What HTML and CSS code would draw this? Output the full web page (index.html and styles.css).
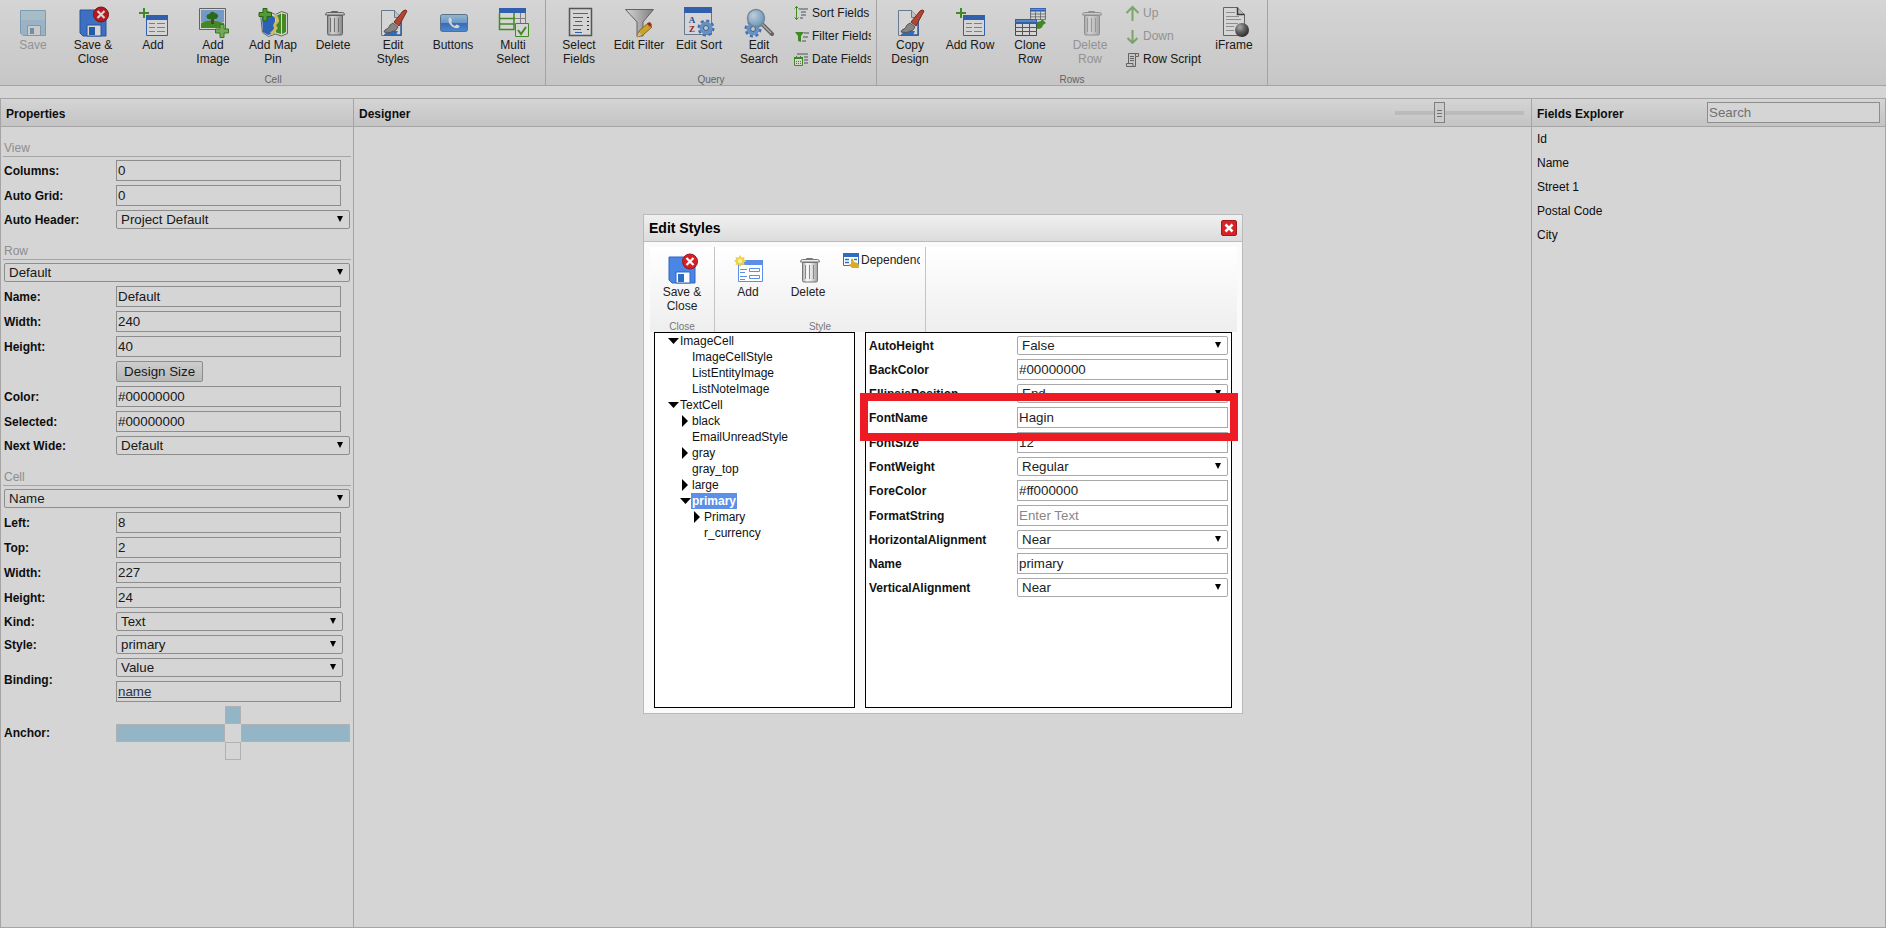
FILE: index.html
```html
<!DOCTYPE html>
<html lang="en">
<head>
<meta charset="utf-8">
<title>Designer</title>
<link rel="stylesheet" href="styles.css">
</head>
<body>
<svg class="sprite" aria-hidden="true">
  <defs>
    <linearGradient id="g-steel" x1="0" x2="1"><stop offset="0" stop-color="#a8a8a8"/><stop offset=".3" stop-color="#fafafa"/><stop offset=".6" stop-color="#e2e2e2"/><stop offset="1" stop-color="#a0a0a0"/></linearGradient>
    <linearGradient id="g-blue" x1="0" x2="0" y1="0" y2="1"><stop offset="0" stop-color="#b4dcf6"/><stop offset=".5" stop-color="#7db4ee"/><stop offset=".52" stop-color="#3f83e0"/><stop offset="1" stop-color="#5ea4f4"/></linearGradient>
    <linearGradient id="g-fun" x1="0" x2="1"><stop offset="0" stop-color="#fff"/><stop offset="1" stop-color="#999"/></linearGradient>
    <radialGradient id="g-ball" cx=".35" cy=".3" r=".7"><stop offset="0" stop-color="#ccc"/><stop offset=".5" stop-color="#777"/><stop offset="1" stop-color="#3a3a3a"/></radialGradient>
    <radialGradient id="g-lens" cx=".35" cy=".35" r=".7"><stop offset="0" stop-color="#e8f6ff"/><stop offset="1" stop-color="#7cb4e4"/></radialGradient>
  </defs>
  <symbol id="floppy" viewBox="0 0 32 32">
    <path d="M3 4h26v26H6l-3-3z" fill="#4a86e6" stroke="#3067bd"/><path d="M10 19h14v11H10z" fill="#fff" stroke="#3067bd"/><path d="M12 21h6v8h-6z" fill="#2b6fc4"/>
  </symbol>
  <symbol id="badge" viewBox="0 0 32 32">
    <circle cx="24" cy="8.500" r="7.500" fill="#d81f26" stroke="#96161b"/><path d="M20.500 5l7 7m0-7l-7 7" stroke="#fff" stroke-width="2.200"/>
  </symbol>
  <symbol id="i-save" viewBox="0 0 32 32">
    <path d="M3.500 4.500h25v25H6l-2.500-2.500z" fill="#8ec0e6" stroke="#4f92bd"/><path d="M4 5h24v9H4z" fill="#a8d2e4"/><path d="M10.500 19.500h13v10h-13z" fill="#eee" stroke="#5a8fb0"/><path d="M13 22h4v6h-4z" fill="#3a7cac"/>
  </symbol>
  <symbol id="i-saveclose" viewBox="0 0 32 32"><use href="#floppy"/><use href="#badge"/></symbol>
  <symbol id="i-add" viewBox="0 0 32 32">
    <path d="M2 7h10M7 2v10" stroke="#4fa52c" stroke-width="2"/><path d="M9.500 9.500h21v20h-21z" fill="#fff" stroke="#3a74cf"/><path d="M9 9h22v5H9z" fill="#3a74cf"/>
    <path d="M12 17.500h6m2 0h8M12 21.500h6m2 0h8M12 25.500h6m2 0h8" stroke="#999"/>
  </symbol>
  <symbol id="i-image" viewBox="0 0 32 32">
    <path d="M2.500 2.500h26v21h-26z" fill="#fff" stroke="#777"/><path d="M4 4h23v12H4z" fill="#8db8ec"/><path d="M4 17q8-5 23 0v5H4z" fill="#4fa52c"/><path d="M14 12h3v6h-3z" fill="#7b4a22"/><path d="M9.500 11q0-3 3-3 2-4 5.500-1 4 1 3 4-1 3-6 2-5 1-5.500-2z" fill="#2f8020"/>
    <path d="M23 18.500h4v4.500h4.500v4H27v4.500h-4V27h-4.500v-4H23z" fill="#8ccb6a" stroke="#3d8f1f"/>
  </symbol>
  <symbol id="i-map" viewBox="0 0 32 32">
    <path d="M3.500 8l8-2.500 7 3 6-3 6 2v20l-6 2.500-6-2-7 2.500-6-4z" fill="#fff" stroke="#777"/><path d="M5 10l6-2 7 3v16l-7 2-5-3z" fill="#3576d8"/><path d="M19 10l5-2.500V28l-5-1.500zM25 7.500l4 1V26l-4 2z" fill="#4fa52c"/><path d="M17 9q5 4 3 7-4 3-1 6-2 4-5 6" fill="none" stroke="#f2e07a" stroke-width="3"/>
    <path d="M6 2.500h4v4h4.500v4H10v4.500H6v-4.500H2v-4h4z" fill="#66b83f" stroke="#2f7d18"/>
  </symbol>
  <symbol id="i-trash" viewBox="0 0 32 32">
    <path d="M10.500 9.500h15v18q0 1.500-1.500 1.500H12q-1.500 0-1.500-1.500z" fill="url(#g-steel)" stroke="#777"/><path d="M13.500 12v14M17.500 12v14M21.500 12v14" stroke="#888"/><path d="M8.500 9q0-2.500 2-2.500h15q2 0 2 2.500z" fill="#eee" stroke="#777"/><path d="M14.500 6.500v-1h6v1" fill="none" stroke="#777"/>
  </symbol>
  <symbol id="i-brush" viewBox="0 0 32 32">
    <path d="M4.500 4.500h13l7 7v18h-20z" fill="#fff" stroke="#7c93ad"/><path d="M17.500 4.500v7h7" fill="#e6e6e6" stroke="#7c93ad"/><path d="M24 14v15H7" fill="none" stroke="#3d6fb4" stroke-width="1.500"/>
    <path d="M9 23l4 2 8 0-2 4H8z" fill="#3b80da"/><path d="M8 24q4-1 5-5l3-2 5 4-2 3q-6 4-12 2z" fill="#a3a0a0" stroke="#666"/><path d="M17 16L26 5q3-2 4 0l-8 15z" fill="#d4543f" stroke="#8d3226"/>
  </symbol>
  <symbol id="i-phone" viewBox="0 0 32 32">
    <rect x="3.500" y="8.500" width="27" height="17" rx="2" fill="url(#g-blue)" stroke="#6c86a4"/><path d="M12 12q1-1 2 0l1 3-1 1q1 3 4 4l1.500-1.500 2.500 1q1 1 0 2-3 2-7-1-5-4-3-8.500z" fill="#fff"/>
  </symbol>
  <symbol id="i-multi" viewBox="0 0 32 32">
    <path d="M2 2h27v22H2z" fill="#fff"/><path d="M18 12.500h11M23.500 7v11M28.500 7v10" stroke="#999"/><path d="M2 2h27v5H2z" fill="#3a74cf"/><path d="M2.500 7v16.500H17V7M2 12.500h16M2 18h15" fill="none" stroke="#4fa52c" stroke-width="1.500"/>
    <path d="M18.500 17.500h13v13h-13z" fill="#fff" stroke="#4fa52c"/><path d="M21 24l3 4 5-7" fill="none" stroke="#4fa52c" stroke-width="2"/>
  </symbol>
  <symbol id="i-select" viewBox="0 0 32 32">
    <path d="M6.500 2.500h22v27h-22z" fill="#fff" stroke="#666" stroke-width="1.500"/><path d="M10 7.500h15M10 19.500h10" stroke="#777"/><path d="M10 11.500h10M12 15.500h7M10 23.500h8M12 26.500h7" stroke="#3a74cf"/><path d="M24 11.500h2M24 15.500h2M24 19.500h2M24 23.500h2" stroke="#333"/>
  </symbol>
  <symbol id="i-filter" viewBox="0 0 32 32">
    <path d="M2.500 3.500h28L20 16v14h-6V16z" fill="url(#g-fun)" stroke="#777"/><path d="M14 31l2-6 9-8 4 4-9 8z" fill="#f2c435" stroke="#a87a1d"/><path d="M24 18l2-2q2 0 3 3l-2 2z" fill="#c9302a"/><path d="M14 31l2-5 3 3z" fill="#f6e3c4"/>
  </symbol>
  <symbol id="gear" viewBox="0 0 18 18">
    <circle cx="9" cy="9" r="7" fill="none" stroke="#4a86d8" stroke-width="3" stroke-dasharray="3 2.500"/><circle cx="9" cy="9" r="4.500" fill="none" stroke="#7eaee6" stroke-width="4"/><circle cx="9" cy="9" r="2.500" fill="#eee" stroke="#3a6fb8"/>
  </symbol>
  <symbol id="i-search" viewBox="0 0 32 32">
    <use href="#gear" x="1" y="14" width="18" height="18"/><path d="M19 18l10 10" stroke="#777" stroke-width="4" stroke-linecap="round"/><path d="M19 18l9 9" stroke="#ccc" stroke-width="1.500"/><circle cx="13" cy="12" r="8.500" fill="url(#g-lens)" stroke="#8da3b8" stroke-width="1.500"/>
  </symbol>
  <symbol id="table" viewBox="0 0 22 17">
    <path d="M.5.500h21v16H.5z" fill="#fff" stroke="#555"/><path d="M0 0h22v5H0z" fill="#3a74cf"/><path d="M1 2h20" stroke="#a9c9f3"/><path d="M0 8.500h22M0 12.500h22M7.500 5v12M14.500 5v12" stroke="#666"/>
  </symbol>
  <symbol id="i-clone" viewBox="0 0 32 32">
    <use href="#table" x="16" y="2" width="16" height="12"/><path d="M22 22l1-6 4-1 1-2 4 4-3 2q-1 4-5 4z" fill="#4fa52c"/><use href="#table" x="1" y="13" width="22" height="17"/>
  </symbol>
  <symbol id="i-iframe" viewBox="0 0 32 32">
    <path d="M5.500 1.500h14l7 7v21h-21z" fill="#fff" stroke="#777"/><path d="M19.500 1.500v7h7" fill="#ddd" stroke="#444" stroke-width="1.500"/><path d="M8 6.500h9M8 10.500h13M8 13.500h15M8 17.500h12M8 20.500h8M8 24.500h8" stroke="#aaa"/><circle cx="24" cy="24" r="7" fill="url(#g-ball)"/>
  </symbol>
  <symbol id="i-newstyle" viewBox="0 0 32 32">
    <path d="M6.500 7.500h24v21h-24z" fill="#fff" stroke="#5b8fe8"/><path d="M6 7h25v5H6z" fill="#5b8fe8"/><path d="M8 16.500h7M8 19.500h5M8 23.500h7M8 26.500h5M17.500 15.500h10v3h-10zM17.500 22.500h10v3h-10z" fill="none" stroke="#5b8fe8"/>
    <path d="M8 2l1.500 2.500L12.500 4 12 6.500l2.500 1.500L12 9.500l.5 2.500-3-.5L8 14l-1.500-2.500-3 .5.500-2.500L2 8l2-1.500L3.500 4l3 .5z" fill="#eed34a"/><circle cx="8" cy="8" r="2" fill="#fff3a8"/>
  </symbol>
  <symbol id="s-sort" viewBox="0 0 16 16"><path d="M2.500 1v14M.5 3.500l2-2 2 2M.5 12.500l2 2 2-2" fill="none" stroke="#4fa52c"/><path d="M5 4h9M7 7h5M7 10h5M6 13h3" stroke="#8c959e" stroke-width="1.500"/></symbol>
  <symbol id="s-filter" viewBox="0 0 16 16"><path d="M1 4h9L7 8v6l-3-1V8z" fill="#4fa52c"/><path d="M10 5h5M9 9h5M8 13h4" stroke="#8c959e" stroke-width="1.500"/></symbol>
  <symbol id="s-date" viewBox="0 0 16 16"><path d="M3 3h11M10 6h4M10 9h4M10 12h4" stroke="#8c959e" stroke-width="1.500"/><path d="M.5 6.500h8v8h-8z" fill="#fff" stroke="#4fa52c"/><path d="M0 6h9v2H0zM2 5h1v1H2zM6 5h1v1H6z" fill="#4fa52c"/><path d="M2 10.500h5M2 12.500h5" stroke="#4fa52c" stroke-dasharray="1 1"/></symbol>
  <symbol id="s-up" viewBox="0 0 16 16"><path d="M7.500 2v15M1.500 8l6-6 6 6" fill="none" stroke="#4fa52c" stroke-width="2"/></symbol>
  <symbol id="s-down" viewBox="0 0 16 16"><path d="M7.500 2v13M2.500 10l5 5 5-5" fill="none" stroke="#4fa52c" stroke-width="2"/></symbol>
  <symbol id="s-script" viewBox="0 0 16 16"><path d="M3.500 2.500h10v3h-3v10h-9v-3h2z" fill="#eee" stroke="#777"/><path d="M10.500 2.500v3M2 12.500h6v3M5 5.500h4M5 7.500h4M5 9.500h4" fill="none" stroke="#777"/></symbol>
  <symbol id="s-dep" viewBox="0 0 16 16"><path d="M.5 1.500h15v12H.5z" fill="#fff" stroke="#2f6bc0"/><path d="M0 1h16v4H0z" fill="#2f6bc0"/><path d="M2 7.500h4M11 7.500h3M2 10.500h4" stroke="#2f6bc0" stroke-width="1.500"/><path d="M8 7q1-1 2 0l1 3 4 1q1 1 1 5H9l-3-3q0-1 2-1z" fill="#dca92a"/></symbol>
</svg>

<header class="ribbon">
  <section class="group">
    <div class="tools">
      <button class="tool dim"><svg><use href="#i-save"/></svg>Save</button>
      <button class="tool"><svg><use href="#i-saveclose"/></svg>Save &amp;<br>Close</button>
      <button class="tool"><svg><use href="#i-add"/></svg>Add</button>
      <button class="tool"><svg><use href="#i-image"/></svg>Add<br>Image</button>
      <button class="tool"><svg><use href="#i-map"/></svg>Add Map<br>Pin</button>
      <button class="tool"><svg><use href="#i-trash"/></svg>Delete</button>
      <button class="tool"><svg><use href="#i-brush"/></svg>Edit<br>Styles</button>
      <button class="tool"><svg><use href="#i-phone"/></svg>Buttons</button>
      <button class="tool"><svg><use href="#i-multi"/></svg>Multi<br>Select</button>
    </div>
    <div class="group-name">Cell</div>
  </section>
  <section class="group">
    <div class="tools">
      <button class="tool"><svg><use href="#i-select"/></svg>Select<br>Fields</button>
      <button class="tool"><svg><use href="#i-filter"/></svg>Edit Filter</button>
      <button class="tool"><svg viewBox="0 0 32 32"><path d="M1.500 1.500h27v27h-27z" fill="#fff" stroke="#7c93ad"/><path d="M1 1h28v6H1z" fill="#3a74cf"/><text x="9" y="17" class="az az-a">A</text><text x="9" y="26" class="az az-z">Z</text><use href="#gear" x="14" y="13" width="18" height="18"/></svg>Edit Sort</button>
      <button class="tool"><svg><use href="#i-search"/></svg>Edit<br>Search</button>
      <div class="stack">
        <button class="mini"><svg><use href="#s-sort"/></svg>Sort Fields</button>
        <button class="mini"><svg><use href="#s-filter"/></svg>Filter Fields</button>
        <button class="mini"><svg><use href="#s-date"/></svg>Date Fields</button>
      </div>
    </div>
    <div class="group-name">Query</div>
  </section>
  <section class="group">
    <div class="tools">
      <button class="tool"><svg><use href="#i-brush"/></svg>Copy<br>Design</button>
      <button class="tool"><svg><use href="#i-add"/></svg>Add Row</button>
      <button class="tool"><svg><use href="#i-clone"/></svg>Clone<br>Row</button>
      <button class="tool dim"><svg><use href="#i-trash"/></svg>Delete<br>Row</button>
      <div class="stack">
        <button class="mini dim"><svg><use href="#s-up"/></svg>Up</button>
        <button class="mini dim"><svg><use href="#s-down"/></svg>Down</button>
        <button class="mini"><svg><use href="#s-script"/></svg>Row Script</button>
      </div>
      <button class="tool"><svg><use href="#i-iframe"/></svg>iFrame</button>
    </div>
    <div class="group-name">Rows</div>
  </section>
</header>

<main class="workspace">
  <section class="panel">
    <div class="bar"><h2>Properties</h2></div>
    <form class="props">
      <h3>View</h3>
      <div class="row"><label for="columns">Columns:</label><input id="columns" value="0"></div>
      <div class="row"><label for="autogrid">Auto Grid:</label><input id="autogrid" value="0"></div>
      <div class="row"><label for="autoheader">Auto Header:</label><span class="pick"><select id="autoheader"><option>Project Default</option></select></span></div>
      <h3>Row</h3>
      <div class="row full"><span class="pick"><select aria-label="Row"><option>Default</option></select></span></div>
      <div class="row"><label for="rname">Name:</label><input id="rname" value="Default"></div>
      <div class="row"><label for="rwidth">Width:</label><input id="rwidth" value="240"></div>
      <div class="row"><label for="rheight">Height:</label><input id="rheight" value="40"></div>
      <div class="row"><span></span><button type="button" class="push">Design Size</button></div>
      <div class="row"><label for="rcolor">Color:</label><input id="rcolor" value="#00000000"></div>
      <div class="row"><label for="rselected">Selected:</label><input id="rselected" value="#00000000"></div>
      <div class="row"><label for="rnext">Next Wide:</label><span class="pick"><select id="rnext"><option>Default</option></select></span></div>
      <h3>Cell</h3>
      <div class="row full"><span class="pick"><select aria-label="Cell"><option>Name</option></select></span></div>
      <div class="row"><label for="cleft">Left:</label><input id="cleft" value="8"></div>
      <div class="row"><label for="ctop">Top:</label><input id="ctop" value="2"></div>
      <div class="row"><label for="cwidth">Width:</label><input id="cwidth" value="227"></div>
      <div class="row"><label for="cheight">Height:</label><input id="cheight" value="24"></div>
      <div class="row"><label for="ckind">Kind:</label><span class="pick short"><select id="ckind"><option>Text</option></select></span></div>
      <div class="row"><label for="cstyle">Style:</label><span class="pick short"><select id="cstyle"><option>primary</option></select></span></div>
      <div class="row"><label for="cbind">Binding:</label>
        <div class="pair"><span class="pick short"><select id="cbind"><option>Value</option></select></span><input class="linked" aria-label="Bound field" value="name"></div>
      </div>
      <div class="row"><span class="name">Anchor:</span>
        <div class="anchor">
          <button type="button" class="top on" aria-label="Top"></button>
          <button type="button" class="left on" aria-label="Left"></button>
          <button type="button" class="right on" aria-label="Right"></button>
          <button type="button" class="bottom" aria-label="Bottom"></button>
        </div>
      </div>
    </form>
  </section>
  <section class="panel">
    <div class="bar"><h2>Designer</h2><input type="range" class="zoom" min="0" max="100" value="33" aria-label="Zoom"></div>
  </section>
  <section class="panel">
    <div class="bar"><h2>Fields Explorer</h2><input class="find" placeholder="Search" aria-label="Search"></div>
    <ul class="fields"><li>Id</li><li>Name</li><li>Street 1</li><li>Postal Code</li><li>City</li></ul>
  </section>
</main>

<div class="overlay">
  <div class="dialog" role="dialog" aria-labelledby="dlg">
    <div class="title"><h1 id="dlg">Edit Styles</h1><button class="close" aria-label="Close"><svg viewBox="0 0 14 14"><path d="M3.500 3.500l7 7m0-7l-7 7" stroke="#fff" stroke-width="2.500"/></svg></button></div>
    <div class="content">
      <div class="ribbon">
        <section class="group">
          <div class="tools"><button class="tool"><svg><use href="#i-saveclose"/></svg>Save &amp;<br>Close</button></div>
          <div class="group-name">Close</div>
        </section>
        <section class="group">
          <div class="tools">
            <button class="tool"><svg><use href="#i-newstyle"/></svg>Add</button>
            <button class="tool"><svg><use href="#i-trash"/></svg>Delete</button>
            <div class="stack"><button class="mini"><svg><use href="#s-dep"/></svg>Dependencies</button></div>
          </div>
          <div class="group-name">Style</div>
        </section>
      </div>
      <div class="panes">
        <ul class="tree">
          <li><span class="open">ImageCell</span>
            <ul><li><span>ImageCellStyle</span></li><li><span>ListEntityImage</span></li><li><span>ListNoteImage</span></li></ul>
          </li>
          <li><span class="open">TextCell</span>
            <ul>
              <li><span class="shut">black</span></li>
              <li><span>EmailUnreadStyle</span></li>
              <li><span class="shut">gray</span></li>
              <li><span>gray_top</span></li>
              <li><span class="shut">large</span></li>
              <li><span class="open"><b class="current">primary</b></span>
                <ul><li><span class="shut">Primary</span></li><li><span>r_currency</span></li></ul>
              </li>
            </ul>
          </li>
        </ul>
        <form class="sheet">
          <div class="row"><label for="p1">AutoHeight</label><span class="pick"><select id="p1"><option>False</option></select></span></div>
          <div class="row"><label for="p2">BackColor</label><input id="p2" value="#00000000"></div>
          <div class="row"><label for="p3">EllipsisPosition</label><span class="pick"><select id="p3"><option>End</option></select></span></div>
          <div class="row marked"><label for="p4">FontName</label><input id="p4" value="Hagin"></div>
          <div class="row"><label for="p5">FontSize</label><input id="p5" value="12"></div>
          <div class="row"><label for="p6">FontWeight</label><span class="pick"><select id="p6"><option>Regular</option></select></span></div>
          <div class="row"><label for="p7">ForeColor</label><input id="p7" value="#ff000000"></div>
          <div class="row"><label for="p8">FormatString</label><input id="p8" placeholder="Enter Text"></div>
          <div class="row"><label for="p9">HorizontalAlignment</label><span class="pick"><select id="p9"><option>Near</option></select></span></div>
          <div class="row"><label for="p10">Name</label><input id="p10" value="primary"></div>
          <div class="row"><label for="p11">VerticalAlignment</label><span class="pick"><select id="p11"><option>Near</option></select></span></div>
        </form>
      </div>
    </div>
  </div>
</div>
</body>
</html>
```

FILE: styles.css
```css
* { box-sizing: border-box; }

body {
  margin: 0;
  min-height: 100vh;
  display: flex;
  flex-direction: column;
  background: #fff;
  color: #111;
  font: 12px/14px "Liberation Sans", Arial, sans-serif;
}

h1, h2, h3, ul { margin: 0; padding: 0; font-size: 12px; list-style: none; }
input, select, button { font-family: inherit; margin: 0; color: #222; }
.sprite { position: absolute; width: 0; height: 0; }
.az { font: bold 9px "Liberation Serif", serif; text-anchor: middle; }
.az-a { fill: #2b5ea8; }
.az-z { fill: #b02a2a; }

/* Ribbon */
.ribbon {
  display: flex;
  border-bottom: 1px solid #c4c4c4;
  background: linear-gradient(#fff, #eee);
}
.group { padding: 0 2px 0 3px; border-right: 1px solid #c4c4c4; }
.group + .group { padding: 0 3px; }
.tools { display: flex; height: 73px; }
.tool {
  display: flow-root;
  width: 60px;
  padding: 6px 0 0;
  border: 0;
  background: none;
  font-size: 12px;
  line-height: 14px;
  text-align: center;
  white-space: nowrap;
  align-self: flex-start;
}
.tool svg { display: block; width: 32px; height: 32px; margin: 0 auto; }
.stack { display: flex; flex-direction: column; gap: 7px; width: 84px; padding: 5px 2px 0 5px; }
.mini {
  display: flex;
  align-items: center;
  gap: 2px;
  height: 16px;
  padding: 0;
  border: 0;
  background: none;
  font-size: 12px;
  line-height: 16px;
  white-space: nowrap;
  overflow: hidden;
}
.mini svg { flex: none; width: 16px; height: 16px; }
.dim { color: #b0b0b0; }
.dim svg { opacity: .6; }
.group-name { height: 12px; font-size: 10px; line-height: 14px; text-align: center; color: #777; }

/* Panels */
.workspace {
  flex: 1;
  display: grid;
  grid-template-columns: 353px 1fr 354px;
  margin-top: 12px;
  border: solid #c6c6c6;
  border-width: 1px 1px 1px 0;
}
.panel { border-left: 1px solid #c6c6c6; }
.bar {
  display: flex;
  justify-content: space-between;
  align-items: center;
  height: 28px;
  padding: 0 5px;
  border-bottom: 1px solid #c6c6c6;
  background: linear-gradient(#fff, #ebebeb);
}
.bar h2 { padding-top: 2px; }

.zoom { appearance: none; width: 129px; height: 21px; margin: 0 2px 0 0; background: none; }
.zoom::-webkit-slider-runnable-track { height: 4px; background: #e0e0e0; }
.zoom::-webkit-slider-thumb {
  appearance: none;
  width: 11px;
  height: 21px;
  margin-top: -9px;
  border: 1px solid #999;
  background:
    linear-gradient(#888, #888) center 7px / 5px 1px no-repeat,
    linear-gradient(#888, #888) center 10px / 5px 1px no-repeat,
    linear-gradient(#888, #888) center 13px / 5px 1px no-repeat,
    #f4f4f4;
}
.fields li { padding: 0 5px; line-height: 24px; }

/* Form rows */
.props { padding: 3px 3px 0 3px; }
.props h3 {
  width: 348px;
  height: 27px;
  margin: 0 0 3px -1px;
  padding: 11px 1px 0;
  border-bottom: 1px solid #c6c6c6;
  font-weight: normal;
  color: #aaa;
}
.row {
  display: grid;
  grid-template-columns: 112px 1fr;
  align-items: center;
  justify-items: start;
  margin-bottom: 4px;
}
.row.full { grid-template-columns: 1fr; }
.row.full .pick { width: 346px; }
.row label, .name { font-weight: bold; }
input:not([type=range]) {
  width: 225px;
  height: 21px;
  padding: 1px;
  border: 1px solid #a9a9a9;
  background: #fff;
}
input.find:not([type=range]) { width: 173px; }
::placeholder { color: #888; }
input.linked { color: #33415f; text-decoration: underline; }
.pick { position: relative; display: block; width: 234px; height: 19px; }
.pick.short { width: 227px; }
.pick::after {
  content: "";
  position: absolute;
  top: 6px;
  right: 7px;
  width: 6px;
  height: 6px;
  background: #000;
  clip-path: polygon(0 0, 100% 0, 50% 100%);
  pointer-events: none;
}
select {
  appearance: none;
  display: block;
  width: 100%;
  height: 19px;
  padding: 0 4px;
  border: 1px solid #a9a9a9;
  border-radius: 2px;
  background: #fff;
}
.push {
  height: 21px;
  padding: 0 7px;
  border: 1px solid #a9a9a9;
  border-radius: 2px;
  background: linear-gradient(#f6f6f6, #dcdcdc);
}
.pair { display: grid; gap: 4px; }
.anchor {
  display: grid;
  grid-template: repeat(3, 18px) / 1fr 16px 1fr;
  width: 234px;
}
.anchor button { padding: 0; border: 1px solid #d4d4d4; background: #fff; }
.anchor .on { background: #b2d9ec; }
.anchor .top { grid-area: 1 / 2; }
.anchor .left { grid-area: 2 / 1; }
.anchor .right { grid-area: 2 / 3; }
.anchor .bottom { grid-area: 3 / 2; }

/* Dialog */
.overlay {
  position: fixed;
  inset: 0;
  display: flex;
  align-items: center;
  justify-content: center;
  background: rgba(0, 0, 0, .165);
}
.dialog {
  display: flex;
  flex-direction: column;
  width: 600px;
  height: 500px;
  border: 1px solid #bbb;
  background: #fafafa;
}
.title {
  display: flex;
  justify-content: space-between;
  align-items: center;
  height: 27px;
  padding: 0 5px;
  border-bottom: 1px solid #bbb;
  background: linear-gradient(#f0f0f0, #dcdcdc);
}
.title h1 { font-size: 14px; color: #000; }
.close {
  width: 16px;
  height: 16px;
  padding: 0;
  border: 1px solid #9c1c20;
  border-radius: 2px;
  background: #d92228;
}
.close svg { display: block; }
.content { flex: 1; display: flex; flex-direction: column; padding: 5px 5px 5px 6px; }
.dialog .ribbon { border: 0; }
.dialog .group { padding: 0 2px; }
.dialog .group + .group { padding: 0 3px; }
.panes { flex: 1; display: flex; gap: 10px; padding: 0 5px 0 4px; }
.tree { width: 201px; padding-left: 25px; border: 1px solid #000; background: #fff; line-height: 16px; }
.tree ul { padding-left: 12px; }
.tree span { position: relative; display: block; }
.open::before, .shut::before { content: ""; position: absolute; background: #000; }
.open::before { top: 5px; left: -12px; width: 11px; height: 6px; clip-path: polygon(0 0, 100% 0, 50% 100%); }
.shut::before { top: 2px; left: -10px; width: 6px; height: 12px; clip-path: polygon(0 0, 100% 50%, 0 100%); }
.current { display: inline-block; margin-left: -1px; padding: 0 1px; background: #5b8fe8; color: #fff; }
.sheet { flex: 1; padding: 3px; border: 1px solid #000; background: #fff; }
.sheet .row { grid-template-columns: 148px 1fr; }
.sheet .row input, .sheet .pick { width: 100%; }
.marked { position: relative; }
.marked::after {
  content: "";
  position: absolute;
  inset: -14px -10px -13px -9px;
  border: 8px solid #ed1c24;
  pointer-events: none;
}
```
